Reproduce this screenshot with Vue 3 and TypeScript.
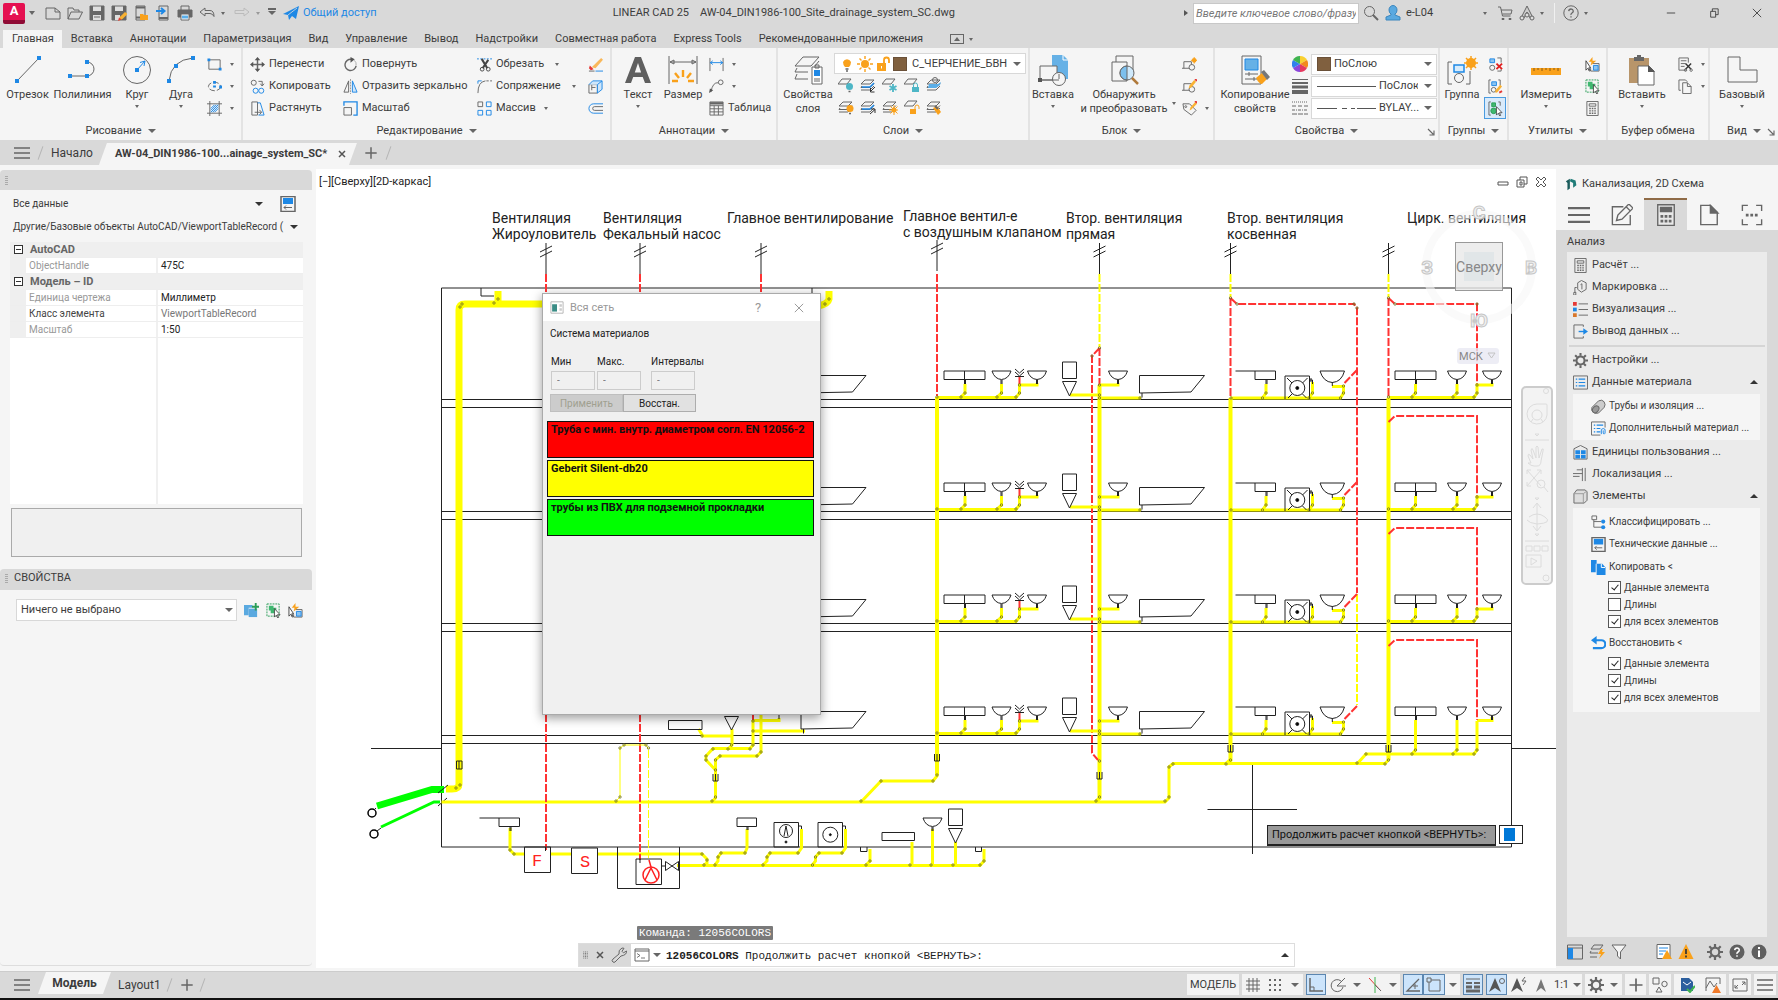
<script setup lang="ts">
import { h, ref } from 'vue'

const sheets = '<path d="M5 3h9l-4 4H1zM2 9l-1 1.500h9l4-4M1 13h9l4-4"/>'
const oneSheet = '<path d="M4 2h9l-4 5H0z"/>'
const blockBase = '<path d="M2 12V5h8v3M0 12h8"/><circle cx="10.500" cy="11" r="3"/>'
const cursor = '<path d="M9 6v9l2-2 1.500 3 1-.5-1.300-3H15z" fill="#fff" stroke="#444" stroke-width=".9"/>'

const icons: Record<string, string> = {
  fresh: '<path d="M1 3h9l5 4v7H1zM10 3v4h5"/>',
  open: '<path d="M1 14V3h5l1 2h5v2M1 14L4 7h11.500L12 14z"/>',
  save: '<path d="M1 1h14v14H1z" fill="#666"/><path d="M4 1.500h8V6H4zM4 10h8v5H4z" fill="#dedede" stroke="none"/><path d="M5 12h6"/>',
  saveas: '<path d="M1 1h14v14H1z" fill="#666"/><path d="M4 1.500h8V6H4zM4 10h5v5H4z" fill="#dedede" stroke="none"/><path d="M14 7l2.500 2-5 5-3.500 1.500.8-3.500z" fill="#f9b233" stroke="none"/><path d="M8 12.500l2.500 2L7 16z" fill="#e53935" stroke="none"/>',
  phoneopen: '<path d="M3 1h9v14H3z"/><path d="M3 2.500h9M3 12.500h4" stroke-width="2"/><path d="M7 15V9h3l1 1h4v5z" fill="#f9a11b" stroke="none"/>',
  phonesave: '<path d="M4 1h9v14H4z"/><path d="M4 13h9" stroke-width="2"/><path d="M1 6h8M6 3l3.500 3L6 9" stroke="#1e88e5" stroke-width="2"/>',
  print: '<path d="M4 5V1h8v4"/><path d="M1 5h14v7H1z" fill="#666"/><path d="M4 9h8v6H4z" fill="#fff"/><path d="M5 12h6" stroke="#5aaee8" stroke-width="3"/>',
  undo: '<path d="M1 7l5-4v2.500h5q4 0 4 6-1.500-3-4-3H6V11z"/>',
  redo: '<path d="M15 7l-5-4v2.500H1v3h9V11z" stroke="#bbb"/>',
  plane: '<path d="M0 9L16 1l-3 13-4-3-3 4-1-5z" fill="#1e88e5" stroke="none"/><path d="M14 3L5 10" stroke="#dedede" stroke-width=".8"/>',
  search: '<circle cx="6.500" cy="6.500" r="5"/><path d="M10 10l5 5" stroke-width="2"/>',
  user: '<path d="M4 5a4 4.500 0 0 1 8 0q0 3-2 4v1l5 2v3H1v-3l5-2V9Q4 8 4 5z" fill="#5aa9e0" stroke="#3b86bd"/>',
  cart: '<path d="M1 2h2.500l2 9h8M4 5h11l-1 4H5.500"/><path d="M5 13.500h2v1H5zM12 13.500h2v1h-2z" fill="#666"/>',
  aorg: '<path d="M8 1L2 13h3l3-6 3 6h3z" fill="#ccc"/><circle cx="3" cy="13" r="2" fill="#dedede"/><circle cx="8" cy="10" r="2" fill="#dedede"/><circle cx="13" cy="13" r="2" fill="#dedede"/>',
  help: '<circle cx="8" cy="8" r="7.200"/><path d="M5.700 6.200Q6 4 8 4t2.300 2Q10.300 7.200 9 8t-1 2M8 11.300v1.200" stroke-width="1.300"/>',
  line: '<path d="M5 27L27 4"/><path d="M3 25h4v4H3zM25 2h4v4h-4z" fill="#1e88e5" stroke="none"/>',
  pline: '<path d="M3 22h17a7 7 0 0 0 0-14"/><path d="M1 20h4v4H1zM18 20h4v4h-4zM18 6h4v4h-4z" fill="#1e88e5" stroke="none"/>',
  circle: '<circle cx="16" cy="16" r="13.500"/><path d="M16 16l8-9M24 7l-1 5M24 7l-5 1.500" stroke="#1e88e5"/><path d="M14 14h4v4h-4z" fill="#1e88e5" stroke="none"/>',
  arc: '<path d="M4 27Q6 6 28 4"/><path d="M2 25h4v4H2zM9 10h4v4H9zM26 2h4v4h-4z" fill="#1e88e5" stroke="none"/>',
  rect: '<path d="M2 3h12v10H2z"/><path d="M.500 1.500h3v3h-3zM12.500 11.500h3v3h-3z" fill="#1e88e5" stroke="none"/>',
  ellipse: '<ellipse cx="8" cy="8" rx="6.500" ry="4.500" stroke-dasharray="6 2"/><path d="M6.500 7h3v2h-3zM6.500 2h3v3h-3zM13 7h3v3h-3z" fill="#1e88e5" stroke="none"/>',
  hatch: '<path d="M3 0v16M13 0v16M0 3h16M0 13h16"/><path d="M4 12l8-8M4 8l4-4M8 12l4-4M4 10l6-6M6 12l6-6" stroke="#1e88e5"/>',
  move: '<path d="M8 2v12M2 8h12" stroke-width="1.600"/><path d="M8 0l3 3.500H5zM8 16l3-3.500H5zM0 8l3.500-3v6zM16 8l-3.500-3v6z" fill="#555" stroke="none"/>',
  copy: '<circle cx="4" cy="4" r="2.700"/><path d="M9 2.500h4V7M11 5l2 2.500L15 5"/><circle cx="6" cy="12.500" r="2.700" stroke="#1e88e5"/><circle cx="12" cy="12.500" r="2.700" stroke="#1e88e5"/>',
  stretch: '<path d="M2 1h6v14H2zM5 12h7M10 9.500l2.500 2.500L10 14.500"/><path d="M8 2h3l4 13H9" stroke="#1e88e5"/>',
  rotate: '<path d="M9 2.500a6 6 0 1 0 5 7" stroke-width="1.500"/><path d="M8 0l4.500 2.500L8 6z" fill="#555" stroke="none"/><path d="M14 9a6 6 0 0 0-2-5.500" stroke="#aaa"/>',
  mirror: '<path d="M6 2v12H1z"/><path d="M10 2v12h5z" stroke="#1e88e5" fill="#cfe6fa"/><path d="M8 0v16" stroke="#999" stroke-dasharray="2 1"/>',
  scale: '<path d="M1 7h8v8H1z"/><path d="M1 5V1h14v14h-4" stroke="#1e88e5" stroke-width="1.400"/>',
  trim: '<path d="M0 2h16" stroke="#1e88e5" stroke-dasharray="2 1.500"/><path d="M5 2l6 10M12 3L6 12" stroke="#444" stroke-width="2.200"/><circle cx="5.500" cy="13" r="2" stroke="#444"/><circle cx="12" cy="13" r="2" stroke="#444"/>',
  fillet: '<path d="M1 15Q1 3 9 2"/><path d="M10 2h6" stroke-dasharray="2.500 1.500"/><path d="M1 5V2h4" stroke="#1e88e5"/>',
  array: '<path d="M1 1h5v5H1z"/><path d="M10 1h5v5h-5zM1 10h5v5H1zM10 10h5v5h-5z" stroke="#1e88e5"/>',
  erase: '<path d="M14 1l2 2-8 9-4-1z" fill="#f9b85a" stroke="none"/><path d="M2 9l4 4-3 1-2-2z" fill="#e53935" stroke="none"/><path d="M1 15h6"/><path d="M8 15h8" stroke="#1e88e5"/>',
  box3d: '<path d="M1 6h9v9H1zM4 6v6M4 9h4"/><path d="M1 6l4-4h10l-5 4M15 2v9l-5 4V6" stroke="#1e88e5" fill="#cfe6fa"/>',
  offset: '<path d="M16 3H6a5 5 0 0 0 0 10h10" stroke="#1e88e5"/><path d="M16 6H7a2 2 0 0 0 0 4h9"/>',
  text: '<path d="M3 29L13 3h6l10 26h-6l-2.300-6h-9.500L9 29zM12.800 18.500h6.300L16 9z" fill="#5f5f5f" fill-rule="evenodd" stroke="none"/>',
  dim: '<path d="M2 2v28M30 2v28M3 8h26M3 8l4-2v4zM29 8l-4-2v4z"/><path d="M16 16v7M8 19l4 5M24 19l-4 5M5 27l6 0M27 27h-6" stroke="#f9a11b" stroke-width="2.400"/>',
  dimsm: '<path d="M1 1v14M15 1v14"/><path d="M1 6h14M4 4L1.500 6 4 8M12 4l2.500 2L12 8" stroke="#1e88e5"/>',
  leader: '<path d="M2 14Q4 3 10 4"/><circle cx="12.500" cy="3.500" r="2.500"/><path d="M0 15l1-5 3.500 2z" fill="#555" stroke="none"/>',
  table: '<path d="M1 1h14v14H1zM1 5h14M1 8.300h14M1 11.600h14M5.500 5v10M10 5v10"/><path d="M1 2.500h14" stroke-width="2.500"/>',
  layers: '<path d="M11 3h16l-8 9H3zM5 14l-2 4h13M5 20l-2 5h13M23 12l4-5"/><path d="M20 13h10v17H20z" fill="#fff"/><path d="M22 16h6v6h-6z" fill="#1e88e5" stroke="none"/><path d="M22 25h6M22 27h6M23 11h4v3h-4z"/>',
  bulb: '<path d="M4 6a4.500 5 0 0 1 8 0q0 3-2 5H6Q4 9 4 6z" fill="#f9a11b" stroke="none"/><path d="M6.500 13h3M7 15h2" stroke-width="1.500"/>',
  sun: '<circle cx="8" cy="8" r="4" fill="#f9a11b" stroke="none"/><path d="M8 0v3M8 13v3M0 8h3M13 8h3M2.500 2.500l2 2M11.500 11.500l2 2M13.500 2.500l-2 2M4.500 11.500l-2 2" stroke="#f9a11b" stroke-width="1.400"/>',
  unlock: '<path d="M2 7h9v8H2z" fill="#f9a11b" stroke="none"/><path d="M9 7V4a2.500 2.500 0 0 1 5 0v3" stroke="#f9a11b" stroke-width="1.800"/><path d="M6.500 10v2.500" stroke="#fff"/>',
  l1: oneSheet + '<circle cx="11.500" cy="9.500" r="3.500" fill="#4db6c6" stroke="none"/><path d="M10.500 14.500h2" stroke-width="1.500"/>',
  l2: sheets + '<path d="M2 10h8l4-4" stroke="#1e88e5" stroke-width="1.500"/><path d="M15 10l-4 4M10.500 11v4h4" stroke="#333"/>',
  l3: oneSheet + '<path d="M11 7v8M7.500 9l7 4M14.500 9l-7 4" stroke="#4db6c6" stroke-width="1.800"/>',
  l4: oneSheet + '<path d="M8 10h7v5H8z" fill="#4db6c6" stroke="none"/><path d="M9.500 10V8a2 2 0 0 1 4 0v2" stroke="#4db6c6"/>',
  l5: sheets + '<path d="M3 7h9l3-2-1 3-4 3H2z" fill="#5aaee8" stroke="none"/><circle cx="9" cy="3" r="2.500"/>',
  l6: sheets + '<circle cx="12" cy="9.500" r="3.500" fill="#f9a11b" stroke="none"/><path d="M11 14.500h2" stroke-width="1.500"/>',
  l7: sheets + '<path d="M2 10h8l4-4" stroke="#1e88e5" stroke-width="1.500"/><path d="M10 15l5-4.500M11 10h4v4" stroke="#333"/>',
  l8: sheets + '<circle cx="12" cy="11" r="2.500" fill="#f9a11b" stroke="none"/><path d="M12 6v10M7 11h9M8.500 7.500l7 7M15.500 7.500l-7 7" stroke="#f9a11b"/>',
  l9: oneSheet + '<path d="M6 10h6v5H6z" fill="#f9a11b" stroke="none"/><path d="M11 10V8a2 2 0 0 1 4 0v2" stroke="#f9a11b"/>',
  l10: sheets + '<path d="M7 9l4-2 4 6-3 3z" fill="#f9a11b" stroke="none"/><path d="M9 7l3 3" stroke-width="2"/>',
  insert: '<path d="M15 1h11l5 5v19H15z" fill="#66b1e6" stroke="none"/><path d="M26 1v5h5" stroke="#fff"/><path d="M3 26V12h17v14z" fill="#f5f5f5"/><circle cx="22" cy="25" r="6.500" fill="#f5f5f5"/><path d="M3 26h19M22 25v-5"/><path d="M1 24h4v4H1z" fill="#555" stroke="none"/>',
  detect: '<path d="M8 2h17v20H8z"/><path d="M4 8h15v19H4z" fill="#f5f5f5"/><circle cx="19" cy="19" r="7" fill="#cfe9fb"/><path d="M19 12a7 7 0 0 0 0 14z" fill="#7cc0ee"/><path d="M24 24l6 6" stroke="#b07a3c" stroke-width="2.500"/>',
  b1: blockBase + '<circle cx="13" cy="3.500" r="2.500" fill="#f9a11b" stroke="none"/><path d="M13 0v7M9.500 3.500H16" stroke="#f9a11b"/>',
  b2: blockBase + '<path d="M13 1l2 2-5 6-3 1 1-3z" fill="#f9b233" stroke="none"/><path d="M14 0l2 2" stroke="#e53935" stroke-width="2"/>',
  b3: '<path d="M1 3h7l7 7-5 5-8-6z"/><circle cx="4" cy="6" r="1"/><path d="M14 1l2 2-6 6-2 1 1-3z" fill="#f9b233" stroke="none"/><path d="M14 0l2 2" stroke="#e53935" stroke-width="2"/>',
  match: '<path d="M3 2h19v28H3z"/><path d="M6 5h13v11H6z" fill="#66b1e6" stroke="#1e88e5"/><path d="M6 20h13M6 25h13M10 18v4M15 23v4"/><path d="M17 24l6-5 5 6-5 5q-3 0-6-6z" fill="#f9a11b" stroke="none"/><path d="M22 18l3-2 6 7-3 3z" fill="#777" stroke="none"/>',
  wheel: '<g stroke="none"><path d="M8 8V0a8 8 0 0 1 7 4z" fill="#f9d030"/><path d="M8 8l7-4a8 8 0 0 1 0 8z" fill="#f28a1d"/><path d="M8 8l7 4a8 8 0 0 1-7 4z" fill="#e53960"/><path d="M8 8v8a8 8 0 0 1-7-4z" fill="#8b45d9"/><path d="M8 8l-7 4a8 8 0 0 1 0-8z" fill="#2f80ed"/><path d="M8 8L1 4a8 8 0 0 1 7-4z" fill="#3fb44f"/></g>',
  weights: '<path d="M0 1.500h16"/><path d="M0 5h16" stroke-width="2"/><path d="M0 9h16" stroke-width="3"/><path d="M0 14h16" stroke-width="4"/>',
  dashes: '<path d="M0 2h16" stroke-dasharray="1 1"/><path d="M0 6h16" stroke-dasharray="4 2"/><path d="M0 10h16" stroke-dasharray="3 1 1 1"/><path d="M0 14h16" stroke-dasharray="5 1"/>',
  group: '<path d="M6 8H2v22h4M20 30h4V17"/><path d="M8 11h10v7H8z" fill="#d8ecfb" stroke="#1e88e5" stroke-width="1.500"/><circle cx="13" cy="24" r="4.500"/><path d="M25 2v14M18 9h14M20 4l10 10M30 4L20 14" stroke="#f9a11b" stroke-width="1.500"/><circle cx="25" cy="9" r="5" fill="#f9a11b" stroke="none"/>',
  ungroup: '<path d="M2 2h5v4H2z" fill="#8cc4f0" stroke="#1e88e5"/><circle cx="4.500" cy="11.500" r="2.700"/><path d="M10 1h4v5M10 15h4v-2"/><path d="M9 7l6 6M15 7l-6 6" stroke="#e02020" stroke-width="2"/>',
  gedit: '<path d="M3 1H1v14h2M11 1h2v6"/><path d="M4 3h5v4H4z" fill="#8cc4f0" stroke="#1e88e5"/><circle cx="6" cy="11.500" r="2.500"/><path d="M13 6l2 2-5 6-2 1v-3z" fill="#f9b233" stroke="none"/><path d="M12 14.500l3-1.500" stroke="#e53935" stroke-width="2"/>',
  gsel: '<path d="M3 1H1v14h2M11 1h2v4"/><path d="M4 2h4v4H4z" fill="#3fb870" stroke="#2a9d57"/><circle cx="6" cy="10.500" r="3" fill="#3fb870" stroke="#2a9d57"/>' + cursor,
  measure: '<path d="M1 14h30v7H1z" fill="#f9a11b" stroke="none"/><path d="M4 14v3M8 14v2M12 14v3M16 14v2M20 14v3M24 14v2M28 14v3" stroke="#8a5a10"/>',
  qsel: '<path d="M8 7h7v8H6v-3"/><path d="M9 9h5v5H9z" fill="#8cc4f0" stroke="#1e88e5"/><path d="M8 0L4 5h3L6 9l6-5H8z" fill="#f9a11b" stroke="none"/><path d="M1 4v10l2-2 1.500 3 1-.5-1.500-3h2z" fill="#fff" stroke="#444"/>',
  selsim: '<path d="M1 1h13v13H1z" stroke="#2a9d57" stroke-dasharray="2 1"/><path d="M3 3h5v2h3v6H5V8H3z" fill="#3fb870" stroke="none"/>' + cursor,
  calc: '<path d="M2 0.500h12v15H2zM4.500 3h7v2.500h-7z"/><path d="M4.500 8h7M4.500 10.500h7M4.500 13h7" stroke-width="1.500" stroke-dasharray="1.700 1"/>',
  paste: '<path d="M3 4h20v25H3z" fill="#b8956a" stroke="none"/><path d="M8 3h10v4H8zM11 1h4v3h-4z" fill="#666" stroke="none"/><path d="M12 12h11l5 5v14H12z" fill="#fff"/><path d="M22 11l7 7h-7z" fill="#555" stroke="none"/>',
  cut: '<path d="M9 14H1V1h10v5M3 4h6M3 7h5M3 10h4"/><path d="M8 7l6 6M14 7l-6 6" stroke="#333" stroke-width="1.500"/><circle cx="8" cy="14" r="1.300"/><circle cx="14" cy="14" r="1.300"/>',
  clip: '<path d="M3 12H1V1h7l2 2"/><path d="M5 4h5l4 4v7.500H5zM10 4v4h4"/>',
  base: '<path d="M2 3h12v13h17v12H2z"/>',
  burger: '<path d="M0 3h16M0 8h16M0 13h16" stroke-width="1.600"/>',
  plus: '<path d="M8 1.500v13M1.500 8h13" stroke-width="1.700"/>',
  launch: '<path d="M4 4l7 7M12 6v6H6" stroke-width="1.500"/>',
  propcat: '<path d="M1 .500h14v15H1z" stroke-width="1.500"/><path d="M3 2h10v6H3z" fill="#1e88e5" stroke="none"/><path d="M4 11.500h8M6 9.500l-2 2 2 2"/>',
  addsel: '<path d="M0 2h9v3H5v8H0z" fill="#5aa9e0" stroke="none"/><path d="M5 6h9v9H5z" fill="#5aa9e0" stroke="none"/><path d="M12.500 0v8M8.500 4H16" stroke="#2a9d57" stroke-width="2"/>',
  win: '<path d="M0.500 1h15v14h-15z" fill="#fff" stroke="#aaa"/><path d="M2 4h6v9H2z" fill="#3b8d86" stroke="none"/><path d="M11 4h3v3h-3zM11 9h3v3h-3z" fill="#ccc" stroke="none"/>',
  wrench: '<path d="M2 15q-2-1 0-3l6-5Q7 3 11 1l2 .3-2 3 1.500 1.500L15.500 4Q16 8 10 9l-6 6q-1 .8-2 0z"/>',
  grip: '<path d="M4 0v16M8 0v16M12 0v16" stroke-width="2" stroke-dasharray="2 1.500"/>',
  prompt: '<path d="M1 2h14v12H1zM1 4h14"/><path d="M3 6.500l3 2-3 2M7 11h4" stroke-width=".9"/>',
  leaf: '<path d="M1 4l5-3v12l-3 2V6z" fill="#1b5c5c" stroke="none"/><path d="M7 1l6 2 1 6-4 3V6L6 4z" fill="#217c78" stroke="none"/>',
  pencil: '<path d="M9 2H1v13h13V8"/><path d="M4 12l1-4 8-8 3 3-8 8zM11 2l3 3"/>',
  calctab: '<path d="M2 0.500h12v15H2z" fill="#e8e8e8"/><path d="M4 2.500h8v3H4z" fill="#666"/><path d="M4 9h8M4 12.500h8" stroke-width="2" stroke-dasharray="2 1"/>',
  page: '<path d="M2 1h7l5 5v9H2z"/><path d="M9 1l5.500 5.500H9z" fill="#666"/>',
  dots: '<path d="M1 5V1h4M11 1h4v4M15 11v4h-4M5 15H1v-4"/><path d="M3.500 8h9" stroke-width="2" stroke-dasharray="2 1.300"/>',
  mark: '<path d="M5 3l4-2.500L14 3v7l-5 3-4-3z"/><path d="M8 5l1.500-1v6"/><path d="M4 8H2v6M0 14l3-1v3H0z"/>',
  visual: '<path d="M0 0h4v4H0z" fill="#e53935" stroke="none"/><path d="M0 6h4v4H0z" fill="#1e88e5" stroke="none"/><path d="M0 12h4v4H0z" fill="#d9772b" stroke="none"/><path d="M6 2h10M6 8h10M6 14h10"/>',
  out: '<path d="M11 3V1H1v14h10v-2"/><path d="M6 8h7" stroke="#1e88e5" stroke-width="1.500"/><path d="M11 4.500L16 8l-5 3.500z" fill="#1e88e5" stroke="none"/>',
  gear: '<circle cx="8" cy="8" r="4.300" stroke-width="2.200"/><path d="M8 0v3M8 13v3M0 8h3M13 8h3M2.300 2.300l2.200 2.200M11.500 11.500l2.200 2.200M13.700 2.300l-2.200 2.200M4.500 11.500l-2.200 2.200" stroke-width="2.200"/>',
  list: '<path d="M.500 1h15v14H.500z"/><path d="M6 4.500h7M6 8h7M6 11.500h7M3 4.500h1.500M3 8h1.500M3 11.500h1.500" stroke="#1e88e5" stroke-width="1.300"/>',
  pipe: '<path d="M1 9l7-7q4-2 6 1t0 6l-6 6q-4 1-6-1t-1-5z" fill="#ccc"/><ellipse cx="5" cy="11" rx="3" ry="4" fill="#999" transform="rotate(40 5 11)"/>',
  listp: '<path d="M15 7V1H.500v14H10"/><path d="M6 4.500h7M6 8h4M6 11.500h4M3 4.500h1.500M3 8h1.500M3 11.500h1.500" stroke="#1e88e5" stroke-width="1.300"/><path d="M11 14v-5q2-2 4 0v4q-1 2-2 0V10" stroke="#1e88e5"/>',
  house: '<path d="M1 15V4l7-3.500L15 4v11z"/><path d="M2.500 5.500h5v4h-5zM8.500 5.500h5v4h-5zM2.500 10.500h5v4h-5zM8.500 10.500h5v4h-5z" fill="#1e88e5" stroke="none"/>',
  local: '<path d="M0 7h10M0 10h7M10 1v14M13 1v14M4 3h6"/>',
  cube: '<path d="M1 5l3-4h9l2 2v9l-3 3H1z" fill="#ddd"/><path d="M1 5h10v10M11 5l4-3" stroke="#999"/>',
  tree: '<path d="M1 1h5v4H1zM3 5v8h9M3 7h8"/><circle cx="13" cy="7" r="2.200" fill="#1e88e5" stroke="none"/><circle cx="13" cy="13" r="2.200" fill="#1e88e5" stroke="none"/>',
  docs: '<path d="M0 0h6v4H5v9H0z" fill="#1e88e5" stroke="none"/><path d="M6 4h6l3.500 4v8H6z" fill="#1e88e5" stroke="none"/><path d="M11 4v4h4" stroke="#fff"/>',
  back: '<path d="M3 4.500h8a4 4 0 0 1 0 8.500H2" stroke="#1e88e5" stroke-width="2.300"/><path d="M6 0v9L0 4.500z" fill="#1e88e5" stroke="none"/>',
  pane: '<path d="M.500 1h15v14H.500zM.500 4h15"/><path d="M1 4h5v11H1z" fill="#1e88e5" stroke="none"/>',
  sheetbolt: '<path d="M5 1h9l-3 4H2zM1 9h8M1 13h7M2 7l-1 2"/><path d="M12 5l-3 5h3l-2 5 6-7h-3l1-3z" fill="#f9a11b" stroke="none"/>',
  funnel: '<path d="M1 1h14l-5.500 7v7l-3-3V8z" fill="#f5f5f5"/>',
  listwarn: '<path d="M1 0.500h13v14H1z" fill="#fff"/><path d="M3 4h9M3 7h7M3 10h4" stroke="#1e88e5"/><path d="M11 6l5 9H6z" fill="#f9a11b" stroke="none"/>',
  warn: '<path d="M8 0l7.500 15H.500z" fill="#f9a11b" stroke="none"/><path d="M8 5v5M8 11.500v2" stroke="#333" stroke-width="1.700"/>',
  helpf: '<circle cx="8" cy="8" r="7.500" fill="#5f5f5f" stroke="none"/><path d="M5.700 6.200Q6 4 8 4t2.300 2Q10.300 7.200 9 8t-1 2M8 11.300v1.500" stroke="#fff" stroke-width="1.500"/>',
  infof: '<circle cx="8" cy="8" r="7.500" fill="#5f5f5f" stroke="none"/><path d="M8 3v2M8 6.500V13" stroke="#fff" stroke-width="2"/>',
  grid: '<path d="M4 1v14M8 1v14M12 1v14M1 4h14M1 8h14M1 12h14"/>',
  snap: '<path d="M2 3h13M2 8h13M2 13h13" stroke-width="2" stroke-dasharray="2 3"/>',
  ortho: '<path d="M2 1v13h13" stroke-width="1.500"/><path d="M2 10h4v4"/>',
  polar: '<path d="M13 10a6 6 0 1 1-2-6M7 9l8-8M7 9h9"/>',
  iso: '<path d="M2 1l12 13" stroke="#e53935"/><path d="M8 0v16" stroke="#3fb44f"/><path d="M8 8l6 6"/>',
  track: '<path d="M14 2L2 14h13" stroke-width="1.300"/><path d="M10 7v5M8 9h5"/>',
  osnap: '<path d="M3 3h11v11H3z"/><path d="M1 1h4v4H1z" fill="#cce4f7"/>',
  lweight: '<path d="M1 2h14"/><path d="M1 6h6M9 6h6" stroke-width="2"/><path d="M1 10h6M9 10h6M1 14h14" stroke-width="3"/>',
  an1: '<path d="M6 1l6 14-6-4-6 4z" fill="#555" stroke="none"/><circle cx="13" cy="4" r="2.500"/>',
  an2: '<path d="M6 1l6 14-6-4-6 4z" fill="#555" stroke="none"/><path d="M14 0l-3 4h4l-3 4"/>',
  an3: '<path d="M8 2l5 13-5-4-5 4z" fill="#777" stroke="none"/>',
  shapes: '<path d="M1 1h6v6H1z"/><circle cx="12.500" cy="7" r="2.700"/><path d="M7 10l3 5H4z"/>',
  hw: '<path d="M2 1h8l4 4v9H2z" fill="#2c5f9e" stroke="none"/><path d="M4 5l4 3 4-3" stroke="#fff"/><path d="M8 12l3 3 5-6" stroke="#3fb44f" stroke-width="2"/>',
  graph: '<path d="M1 14V1h14v6"/><path d="M1 11l4-7 4 6 3-4"/><path d="M11.500 8l4.500 8H7z" fill="#ef7a2a" stroke="none"/>',
  full: '<path d="M1 2h14v12H1zM10 5h3v3M6 11H3V8M13 5l-3 3M3 11l3-3"/>',
}

const Ico = (p: { n: string; s?: number }) =>
  h('svg', { class: 'ico', viewBox: `0 0 ${p.s ?? 16} ${p.s ?? 16}`, innerHTML: icons[p.n], 'aria-hidden': 'true' })
Ico.props = ['n', 's']

const tabs = ['Главная', 'Вставка', 'Аннотации', 'Параметризация', 'Вид', 'Управление', 'Вывод', 'Надстройки', 'Совместная работа', 'Express Tools', 'Рекомендованные приложения']
const quick = ['fresh', 'open', 'save', 'saveas', 'phoneopen', 'phonesave', 'print']

const props = [
  { head: 'AutoCAD', rows: [['ObjectHandle', '475C', 'dim', '']] },
  { head: 'Модель – ID', rows: [['Единица чертежа', 'Миллиметр', 'dim', ''], ['Класс элемента', 'ViewportTableRecord', '', 'dim'], ['Масштаб', '1:50', 'dim', '']] },
]

const copyOpts = ref([
  { t: 'Данные элемента', on: true },
  { t: 'Длины', on: false },
  { t: 'для всех элементов', on: true },
])
const restoreOpts = ref([
  { t: 'Данные элемента', on: true },
  { t: 'Длины', on: true },
  { t: 'для всех элементов', on: true },
])

const legend = [
  { t: 'Труба с мин. внутр. диаметром согл. EN 12056-2', c: 'red' },
  { t: 'Geberit Silent-db20', c: 'yellow' },
  { t: 'трубы из ПВХ для подземной прокладки', c: 'lime' },
]

// Drawing data
const floors = [0, 112, 224, 336]
const vents = [
  { x: 546, y: 243 }, { x: 640, y: 243 }, { x: 761, y: 243 }, { x: 937, y: 240 },
  { x: 1099.5, y: 243 }, { x: 1230.5, y: 243 }, { x: 1388.5, y: 243 },
]
const labels: [number, number, string][] = [
  [492, 223, 'Вентиляция'], [492, 239, 'Жироуловитель'],
  [603, 223, 'Вентиляция'], [603, 239, 'Фекальный насос'],
  [727, 223, 'Главное вентилирование'],
  [903, 221, 'Главное вентил-е'], [903, 237, 'с воздушным клапаном'],
  [1066, 223, 'Втор. вентиляция'], [1066, 239, 'прямая'],
  [1227, 223, 'Втор. вентиляция'], [1227, 239, 'косвенная'],
  [1407, 223, 'Цирк. вентиляция'],
]
const traps = [[715.5, 778], [937, 758], [1099.5, 776], [1230.5, 749], [1388.5, 749]]
const floorNodes = [
  [937, 397], [961, 397], [965, 393], [997, 397], [1001.5, 393], [1016, 397], [1019.5, 393], [1019.5, 385],
  [1099.5, 385], [1099.5, 395], [1099.5, 398], [1140, 398], [1231, 398], [1262.5, 398], [1266, 393],
  [1309, 398], [1312.5, 393], [1340.5, 398], [1343.5, 393], [1343.5, 386],
]
const ventNodes = [
  [1388.5, 397], [1412, 397], [1415.5, 393], [1453, 397], [1457, 393], [1474, 397], [1477, 393], [1477, 385],
]
const nodes = [
  [462, 304], [460, 307], [494, 303], [498, 299], [829, 299], [825, 304], [1099.5, 348], [1092, 356],
  [1230.5, 298], [1237, 304], [1354, 304], [1357, 308], [1388.5, 298], [1395, 304], [1477, 304],
  [713, 749], [706, 756], [706, 760], [715.5, 770], [728, 749], [731.5, 745], [750, 749], [753, 745],
  [757, 756], [761, 752], [720, 756], [715.5, 760], [715.5, 797], [712, 801], [702, 736], [753, 731], [753, 721],
  [620, 748], [624, 745], [646, 745], [648.5, 748], [620, 797], [616, 801],
  [937, 775], [933, 781], [881, 781], [861, 801], [1099.5, 761], [1099.5, 797], [1096, 801], [1165, 801],
  [1169, 797], [1169, 767], [1173, 764], [1226, 764], [1230.5, 760], [1385, 764], [1388.5, 760], [1357, 763],
  [1366, 754], [1412, 754], [1415.5, 750], [1453, 754], [1457, 750], [1474, 754], [1477, 750],
  [510, 850], [514, 854], [702, 854], [707, 860], [704, 865], [715, 865], [718, 857], [721, 853], [745, 853],
  [763, 865], [767, 857], [770, 853], [798, 853], [812.5, 865], [815.5, 857], [819, 853], [842, 853],
  [866, 865], [870, 861], [910, 865], [931, 865], [953, 865], [980, 865], [984, 861], [456, 788], [460, 785],
]

type Cell = { i?: string; t?: string; on?: boolean; car?: boolean; w: number }
const status: Cell[][] = [
  [{ t: 'МОДЕЛЬ', w: 52 }],
  [{ i: 'grid', w: 21 }, { i: 'snap', w: 24 }, { car: true, w: 16 }],
  [{ i: 'ortho', on: true, w: 20 }, { i: 'polar', w: 24 }, { car: true, w: 14 }, { i: 'iso', w: 21 }, { car: true, w: 15 }],
  [{ i: 'track', on: true, w: 20 }, { i: 'osnap', on: true, w: 22 }, { car: true, w: 15 }],
  [{ i: 'lweight', on: true, w: 20 }],
  [{ i: 'an1', on: true, w: 21 }, { i: 'an2', w: 23 }, { i: 'an3', w: 22 }, { t: '1:1', w: 19 }, { car: true, w: 11 }],
  [{ i: 'gear', w: 21 }, { car: true, w: 16 }],
  [{ i: 'plus', w: 21 }],
  [{ i: 'shapes', w: 22 }],
  [{ i: 'hw', w: 26 }, { i: 'graph', w: 26 }],
  [{ i: 'full', w: 22 }],
  [{ i: 'burger', w: 22 }],
]
</script>

<template>
  <div class="app">
    <header class="titlebar">
      <button class="logo" aria-label="Меню приложения">A</button><i class="car wide"></i>
      <button v-for="q in quick" :key="q" class="qb" :aria-label="q"><Ico :n="q" /></button>
      <button class="qb" aria-label="undo"><Ico n="undo" /></button><i class="car slot"></i>
      <button class="qb" aria-label="redo"><Ico n="redo" /></button><i class="car slot faint"></i>
      <i class="car bar"></i>
      <a class="share" href="#"><Ico n="plane" />Общий доступ</a>
      <div class="doc"><span>LINEAR CAD 25</span><span>AW-04_DIN1986-100_Site_drainage_system_SC.dwg</span></div>
      <div class="account">
        <i class="arr"></i>
        <input class="search" type="text" placeholder="Введите ключевое слово/фразу" aria-label="Поиск" />
        <Ico n="search" /><Ico n="user" class="usr" /><span class="uname">e-L04</span>
        <i class="car"></i><Ico n="cart" class="cart" /><Ico n="aorg" /><i class="car"></i>
        <i class="vsep"></i><Ico n="help" /><i class="car"></i>
      </div>
      <div class="winbtns">
        <button aria-label="Свернуть"><svg viewBox="0 0 12 12"><path d="M1 6h10" /></svg></button>
        <button aria-label="Восстановить"><svg viewBox="0 0 12 12"><path d="M2 4h6v7H2zM4 4V1h7v7H8" /></svg></button>
        <button aria-label="Закрыть"><svg viewBox="0 0 12 12"><path d="M1 1l10 10M11 1L1 11" /></svg></button>
      </div>
    </header>

    <nav class="tabs">
      <button v-for="(t, k) in tabs" :key="t" :class="{ active: k === 0 }">{{ t }}</button>
      <button class="collapse" aria-label="Свернуть ленту"><i class="mini"></i><i class="car"></i></button>
    </nav>

    <section class="ribbon">
      <div class="panel">
        <div class="body g-draw">
          <button class="big"><Ico n="line" :s="32" />Отрезок</button>
          <button class="big"><Ico n="pline" :s="32" />Полилиния</button>
          <button class="big"><Ico n="circle" :s="32" />Круг<i class="car"></i></button>
          <button class="big"><Ico n="arc" :s="32" />Дуга<i class="car"></i></button>
          <div class="col">
            <button v-for="n in ['rect', 'ellipse', 'hatch']" :key="n" class="sm" :aria-label="n"><Ico :n="n" /><i class="car"></i></button>
          </div>
        </div>
        <h2>Рисование<i class="car lg"></i></h2>
      </div>
      <div class="panel">
        <div class="body g-edit">
          <div class="col">
            <button class="sm"><Ico n="move" />Перенести</button>
            <button class="sm"><Ico n="copy" />Копировать</button>
            <button class="sm"><Ico n="stretch" />Растянуть</button>
          </div>
          <div class="col">
            <button class="sm"><Ico n="rotate" />Повернуть</button>
            <button class="sm"><Ico n="mirror" />Отразить зеркально</button>
            <button class="sm"><Ico n="scale" />Масштаб</button>
          </div>
          <div class="col">
            <button class="sm"><Ico n="trim" />Обрезать<i class="car far"></i></button>
            <button class="sm"><Ico n="fillet" />Сопряжение<i class="car far"></i></button>
            <button class="sm"><Ico n="array" />Массив<i class="car"></i></button>
          </div>
          <div class="col">
            <button v-for="n in ['erase', 'box3d', 'offset']" :key="n" class="sm" :aria-label="n"><Ico :n="n" /></button>
          </div>
        </div>
        <h2>Редактирование<i class="car lg"></i></h2>
      </div>
      <div class="panel">
        <div class="body g-anno">
          <button class="big"><Ico n="text" :s="32" />Текст<i class="car"></i></button>
          <button class="big"><Ico n="dim" :s="32" />Размер</button>
          <div class="col">
            <button class="sm" aria-label="Линейный"><Ico n="dimsm" /><i class="car"></i></button>
            <button class="sm" aria-label="Выноска"><Ico n="leader" /><i class="car"></i></button>
            <button class="sm"><Ico n="table" />Таблица</button>
          </div>
        </div>
        <h2>Аннотации<i class="car lg"></i></h2>
      </div>
      <div class="panel">
        <div class="body g-layer">
          <button class="big"><Ico n="layers" :s="32" />Свойства<br />слоя</button>
          <div class="col">
            <div class="combo">
              <Ico n="bulb" /><Ico n="sun" /><Ico n="unlock" /><i class="swatch"></i>
              <select aria-label="Слой"><option>С_ЧЕРЧЕНИЕ_БВН</option></select><i class="car lg"></i>
            </div>
            <div class="icons"><button v-for="n in ['l1', 'l2', 'l3', 'l4', 'l5']" :key="n" :aria-label="n"><Ico :n="n" /></button></div>
            <div class="icons"><button v-for="n in ['l6', 'l7', 'l8', 'l9', 'l10']" :key="n" :aria-label="n"><Ico :n="n" /></button></div>
          </div>
        </div>
        <h2>Слои<i class="car lg"></i></h2>
      </div>
      <div class="panel">
        <div class="body g-block">
          <button class="big"><Ico n="insert" :s="32" />Вставка<i class="car"></i></button>
          <button class="big"><Ico n="detect" :s="32" />Обнаружить<br />и преобразовать</button>
          <i class="car low"></i>
          <div class="col">
            <button class="sm" aria-label="Создать"><Ico n="b1" /></button>
            <button class="sm" aria-label="Изменить"><Ico n="b2" /></button>
            <button class="sm" aria-label="Атрибуты"><Ico n="b3" /><i class="car"></i></button>
          </div>
        </div>
        <h2>Блок<i class="car lg"></i></h2>
      </div>
      <div class="panel">
        <div class="body g-props">
          <button class="big"><Ico n="match" :s="32" />Копирование<br />свойств</button>
          <div class="col">
            <div class="prow"><Ico n="wheel" /><div class="combo"><i class="swatch"></i><select aria-label="Цвет"><option>ПоСлою</option></select><i class="car lg"></i></div></div>
            <div class="prow"><Ico n="weights" /><div class="combo"><i class="rule"></i><select class="clip" aria-label="Вес линий"><option>ПоСлою</option></select><i class="car lg"></i></div></div>
            <div class="prow"><Ico n="dashes" /><div class="combo"><i class="rule broken"></i><select aria-label="Тип линий"><option>BYLAY...</option></select><i class="car lg"></i></div></div>
          </div>
        </div>
        <h2>Свойства<i class="car lg"></i><Ico n="launch" class="launch" /></h2>
      </div>
      <div class="panel">
        <div class="body g-group">
          <button class="big"><Ico n="group" :s="32" />Группа</button>
          <div class="col">
            <button class="sm tight" aria-label="Разгруппировать"><Ico n="ungroup" /></button>
            <button class="sm tight" aria-label="Редактировать группу"><Ico n="gedit" /></button>
            <button class="sm tight pressed" aria-label="Выбор группы"><Ico n="gsel" /></button>
          </div>
        </div>
        <h2>Группы<i class="car lg"></i></h2>
      </div>
      <div class="panel">
        <div class="body g-util">
          <button class="big"><Ico n="measure" :s="32" />Измерить<i class="car"></i></button>
          <div class="col">
            <button v-for="n in ['qsel', 'selsim', 'calc']" :key="n" class="sm" :aria-label="n"><Ico :n="n" /></button>
          </div>
        </div>
        <h2>Утилиты<i class="car lg"></i></h2>
      </div>
      <div class="panel">
        <div class="body g-clip">
          <button class="big"><Ico n="paste" :s="32" />Вставить<i class="car"></i></button>
          <div class="col">
            <button class="sm" aria-label="Вырезать"><Ico n="cut" /><i class="car"></i></button>
            <button class="sm" aria-label="Копировать"><Ico n="clip" /><i class="car"></i></button>
          </div>
        </div>
        <h2>Буфер обмена</h2>
      </div>
      <div class="panel">
        <div class="body g-view"><button class="big"><Ico n="base" :s="32" />Базовый<i class="car"></i></button></div>
        <h2>Вид<i class="car lg"></i><Ico n="launch" class="launch" /></h2>
      </div>
    </section>

    <nav class="files">
      <button class="fb" aria-label="Меню"><Ico n="burger" /></button><i class="slash"></i>
      <button class="start">Начало</button>
      <div class="ftab"><span>AW-04_DIN1986-100...ainage_system_SC*</span><button aria-label="Закрыть вкладку"><svg viewBox="0 0 8 8"><path d="M1 1l6 6M7 1L1 7" /></svg></button></div>
      <button class="fb add" aria-label="Новая вкладка"><Ico n="plus" /></button><i class="slash"></i>
    </nav>

    <main class="work">
      <aside class="left">
        <div class="phead"><i class="grip"></i></div>
        <div class="frow"><label for="scope">Все данные</label><i class="car lg dark"></i><button id="scope" class="fi" aria-label="Все данные"><Ico n="propcat" /></button></div>
        <div class="frow second"><span>Другие/Базовые объекты AutoCAD/ViewportTableRecord (</span><i class="car lg dark"></i></div>
        <div class="pgrid">
          <table>
            <colgroup><col class="gut" /><col class="keycol" /><col /></colgroup>
            <tbody v-for="g in props" :key="g.head">
              <tr class="sec"><th class="gut"><i class="mins"></i></th><th colspan="2">{{ g.head }}</th></tr>
              <tr v-for="r in g.rows" :key="r[0]"><td class="gut"></td><td class="key" :class="r[2]">{{ r[0] }}</td><td class="val" :class="r[3]">{{ r[1] }}</td></tr>
            </tbody>
          </table>
        </div>
        <div class="desc"></div>
        <div class="phead low"><i class="grip"></i>СВОЙСТВА</div>
        <div class="selrow">
          <div class="combo"><select aria-label="Выбор"><option>Ничего не выбрано</option></select><i class="car lg"></i></div>
          <button aria-label="Добавить"><Ico n="addsel" /></button>
          <button aria-label="Выбрать"><Ico n="selsim" /></button>
          <button aria-label="Быстрый выбор"><Ico n="qsel" /></button>
        </div>
        <div class="rest"></div>
      </aside>

      <section class="canvas">
        <svg class="drawing" viewBox="316 169 1240 799" preserveAspectRatio="xMidYMid slice">
          <defs>
            <g id="basin"><path d="M-9.500 0H9.500Q7 8 0 8.500Q-7 8-9.500 0z" /><path d="M-.500 9v4M.500 9v4" /></g>
            <g id="wc"><path d="M-7 0H7V16.500H-7zM-7 19.500H7L0 34z" /></g>
            <g id="sink"><path d="M-20.500 0H20.500V8.500H-20.500zM0 0V13M1 8v5" /></g>
            <g id="shelf"><path d="M-30.500 0H9.500V8.500H-11V0M0 8v5M1 8v5" /></g>
            <g id="tub"><path d="M0 0H65L51.500 16.500L0 17.500zM2.500 17.500V22" /></g>
            <g id="washer"><path d="M0 23V0H24.500V23M2 2l5 5M22.500 2l-5 5M3 22l4-4M21.500 22l-4-4M24.500 4h3v4M26 2v4" /><ellipse cx="12.300" cy="12" rx="7.500" ry="7.500" /><circle cx="12.300" cy="12" r="1.500" fill="#000" /></g>
            <g id="trap"><path d="M-2.500-4v7M2.500-4v7M-2.500 3h5M0-4v7" /></g>
          </defs>

          <g class="k">
            <path d="M441.500 288H1511.500V847H441.500z" />
            <path v-for="d in floors" :key="d" :d="`M441.500 ${399.5 + d}H1511.500M441.500 ${407.5 + d}H1511.500`" />
            <path d="M371 748.500H441.500M1511.500 748.500H1556" />
            <path d="M481 288v8h13M812 288v7h8" />
            <path v-for="v in vents" :key="v.x" :d="`M${v.x} ${v.y}v31M${v.x - 6} ${v.y + 9}l12-6M${v.x - 6} ${v.y + 14}l12-6`" />
          </g>

          <g class="y thick">
            <path d="M546 304H465Q459 304 459 310V784Q459 789 452 789H446" />
            <path d="M498 291V302M829 291V299Q828 304 818 306" />
          </g>
          <g class="g"><path class="g1" d="M444 789.500H432L377 806" /><path d="M440 802H434L381 827" /></g>
          <g class="k2"><circle cx="372" cy="813" r="4" /><circle cx="374" cy="834" r="4" /></g>
          <g class="k"><path d="M438 793l10-8M438 806l9-8M376 808l-2 2M381 828l-4 3" /></g>

          <g class="y">
            <path d="M441.500 802H1165L1169 798V767L1173 763.500H1385L1388.500 760" />
            <path d="M937 774V776L933 781H881L861 802" />
            <path class="riser" d="M937 397V775M1099.500 385V798L1096 802M1230.500 398V760L1226 764M1388.500 398V760" />
            <path d="M1357 764L1366 754H1474L1477 750V721M1415.500 720V750L1412 754M1457 720V750L1453 754M1477 720.500H1492V717" />
            <path d="M753 720V745L750 748.500H713L706 756V760L715.500 770" />
            <path d="M761 714V752L757 756H720L715.500 760V798L712 802" />
            <path d="M698.500 729L703 736H732M732 729V745L728 749M753 720.500H779V718M753 731H805" />
            <path d="M510 828V850L514 854H525M550 854H572M597.500 854H702L707 859V863L704 865" />
            <path d="M677 865.500H980L984 861V849M747 829V848L745 853H721L718 857V861L715 865" />
            <path d="M801.500 829V848L798 853H770L767 857V861L763 865M845.500 829V848L842 853H819L815.500 857V861L812.500 865" />
            <path d="M870 849V861L866 865M912 842V865M932.500 829V865M955.500 842V865" />
          </g>
          <g class="r">
            <path d="M546 274V850M640 274V860M761 274V294M753 714V720M937 274V396" />
            <path d="M1099.500 348V385M1099.500 348L1092 356V753L1098 760" />
            <path d="M1230.500 298V397M1230.500 298L1237 304H1354L1357 308V593" />
            <path d="M1388.500 298V397M1388.500 298L1395 304H1477V384" />
            <path v-for="d in [112, 224, 336]" :key="d" :d="`M1388.500 ${310 + d}L1395 ${304 + d}H1477V${384 + d}`" />
          </g>
          <g class="yt"><path d="M1099.500 274V347M1230.500 274V297M1388.500 274V297M1357 594V705" /><path class="thin" d="M648.500 750V858" /><path class="solid" d="M616 801L620 797V748L624 745H646L648.500 749" /></g>

          <g v-for="d in floors" :key="d" :transform="`translate(0 ${d})`">
            <g class="y">
              <path d="M937 397.500H1016L1019.500 393V385H1037V383M965 384V393L961 397M1001.500 384V393L997 397" />
              <path d="M1070 395H1099.500M1099.500 385H1118V383M1099.500 398H1141" />
              <path d="M1230.500 398H1340.500L1343.500 393V386.500H1332M1266 384V393L1262.500 398M1312.500 382V393L1309 398" />
            </g>
            <g v-if="d < 336" class="y"><path d="M1388.500 397.500H1474L1477 393V385H1492V383M1415.500 384V393L1412 397M1457 384V393L1453 397" /></g>
            <g class="r"><path d="M1019.500 376V385M1357 370L1343.500 384" /></g>
            <g class="k">
              <use href="#sink" x="964.500" y="371" /><use href="#basin" x="1001.500" y="371" /><use href="#basin" x="1037" y="371" />
              <path d="M1015 369l4.500 4 4.500-4M1015 372l4.500 4 4.500-4M1015 376.500h9" />
              <use href="#wc" x="1069.500" y="362" /><use href="#basin" x="1118" y="371" /><use href="#tub" x="1139.500" y="375.500" />
              <use href="#tub" x="801" y="375.500" />
              <use href="#shelf" x="1266" y="371" /><use href="#washer" x="1285" y="376" />
              <path d="M1320 371h24.500q-3 11-12.200 11.500q-9-.5-12.300-11.500zM1332.300 382v4" />
              <use href="#sink" x="1415.500" y="371" /><use href="#basin" x="1457" y="371" /><use href="#basin" x="1492" y="371" />
            </g>
            <g class="n"><circle v-for="(n, k) in d < 336 ? floorNodes.concat(ventNodes) : floorNodes" :key="k" :cx="n[0]" :cy="n[1]" r="1.200" /></g>
          </g>

          <g class="k">
            <use v-for="t in traps" :key="t[0]" href="#trap" :x="t[0]" :y="t[1]" />
            <path d="M456.500 761h5.500v8h-5.500zM459 761v8M779 714v5" />
            <path d="M668.500 720.500h33.500v9h-33.500zM724.500 716.500h14L731.500 730z" />
            <use href="#shelf" x="510" y="818" />
            <path d="M524.500 847h26v25.500h-26zM571.500 848h26v25.500h-26zM617.500 847v41.500h62V847M636 859h25.500v25.500H636zM661.500 866h4M665.500 861.500v9l13-9v9zM545.500 847v4M640 859v4" />
            <path d="M737 818h19.500v8.500H737zM747 826v4M748 826v4M774 822.500h24.500V847H774zM818 822.500h24.500V847H818zM798.500 826h3v3M842.500 826h3v3" />
            <circle cx="786" cy="831" r="6.500" /><path d="M784 836l2-10 2 10" /><circle cx="786" cy="842" r="1" fill="#000" />
            <circle cx="830.300" cy="834.700" r="7.500" /><circle cx="830.300" cy="834.700" r="1" fill="#000" />
            <path d="M860.500 847v4.500h6.500V847M975.500 847v4.500h6V847M882 832.500h32.500v8H882z" />
            <use href="#basin" x="932.500" y="818" /><use href="#wc" x="955.500" y="809" />
            <path d="M1207.500 809.500H1297M1252.500 765V854" />
          </g>
          <g class="rs"><circle cx="651" cy="875" r="8" /><path d="M645 880l6-12 6 12M651 867l-2-7" /></g>
          <text class="box" x="532" y="866">F</text><text class="box" x="580" y="867">S</text>
          <g class="n"><circle v-for="(n, k) in nodes" :key="k" :cx="n[0]" :cy="n[1]" r="1.200" /></g>
          <text v-for="l in labels" :key="l[0] + l[2]" class="cad" :x="l[0]" :y="l[1]">{{ l[2] }}</text>

          <g class="cube">
            <circle cx="1479" cy="267" r="53" />
            <rect x="1455.500" y="242.500" width="47" height="48" /><rect class="in" x="1464" y="252" width="30" height="29" />
            <text class="face" x="1479" y="272">Сверху</text>
            <text x="1479" y="219">С</text><text x="1479" y="327">Ю</text><text x="1427" y="274">З</text><text x="1531" y="274">В</text>
            <rect class="pill" x="1457" y="348" width="42" height="16" rx="3" /><text class="msk" x="1471" y="360">МСК</text><path d="M1488 353h7l-3.500 5z" />
          </g>
        </svg>

        <div class="vplabel">[−][Сверху][2D-каркас]</div>
        <div class="vpbtns">
          <button aria-label="Свернуть вид"><svg viewBox="0 0 12 12"><path d="M1 6h10v3H1z" /></svg></button>
          <button aria-label="Восстановить вид"><svg viewBox="0 0 12 12"><path d="M1 4h7v7H1zM4 4V1h7v7H8M4 6h2v3H4z" /></svg></button>
          <button aria-label="Закрыть вид"><svg viewBox="0 0 12 12"><path d="M1 3l2-2 3 3 3-3 2 2-3 3 3 3-2 2-3-3-3 3-2-2 3-3z" /></svg></button>
        </div>
        <svg class="navbar" viewBox="0 0 32 199">
          <rect x="1" y="1" width="30" height="197" rx="4" /><path d="M4 54h24M4 155h24" />
          <path d="M16 18h9q1 0 1 1v10a10 10 0 1 1-10-11z" /><circle cx="16" cy="29" r="5" /><path d="M12 33l-2 3M20 33l2 3" /><circle cx="25" cy="5" r="2.500" /><path d="M14 48h4l-2 2zM14 112h4l-2 2zM14 148h4l-2 2z" />
          <path d="M10 77l-3-7q0-3 2-1l3 4-2-9q1-3 2 0l3 8V61q1-2 2 0l1 11 3-9q2-1 1 2l-2 10q0 5-4 5h-3q-3 0-6-3z" />
          <path d="M6 84l14 16M20 84L6 100M6 88v-4h4M16 84h4v4M6 96v4h4" /><circle cx="20" cy="98" r="4" /><path d="M23 101l4 5" />
          <path d="M16 118v26M12 122l4-5 4 5M12 140l4 5 4-5M8 131q8-6 16 0t-8 7q-8-1-10-4" />
          <path d="M5 160h6v5H5zM13 160h6v5h-6zM21 160h6v5h-6zM5 169h15v12H5zM10 172l6 3-6 4z" /><circle cx="25" cy="192" r="3" />
        </svg>
        <div class="tip"><span>Продолжить расчет кнопкой &lt;ВЕРНУТЬ&gt;:</span><i class="entry"></i></div>

        <div class="dialog">
          <div class="dhead"><Ico n="win" /><span>Вся сеть</span><button aria-label="Справка">?</button><button aria-label="Закрыть"><svg viewBox="0 0 12 12"><path d="M1 1l10 10M11 1L1 11" /></svg></button></div>
          <div class="dbody">
            <p>Система материалов</p>
            <div class="nums">
              <label>Мин<input value="-" disabled /></label>
              <label>Макс.<input value="-" disabled /></label>
              <label>Интервалы<input value="-" disabled /></label>
            </div>
            <div class="acts"><button disabled>Применить</button><button>Восстан.</button></div>
            <ul><li v-for="l in legend" :key="l.c" :class="l.c">{{ l.t }}</li></ul>
          </div>
        </div>

        <div class="cmd">
          <div class="hist">Команда: 12056COLORS</div>
          <div class="cline">
            <div class="cgray"><Ico n="grip" class="gr" /><svg class="cx" viewBox="0 0 8 8"><path d="M1 1l6 6M7 1L1 7" /></svg><Ico n="wrench" /></div>
            <Ico n="prompt" /><i class="car lg"></i>
            <span><b>12056COLORS</b> Продолжить расчет кнопкой &lt;ВЕРНУТЬ&gt;:</span><i class="car up"></i>
          </div>
        </div>
      </section>

      <aside class="right">
        <div class="rtitle"><Ico n="leaf" />Канализация, 2D Схема</div>
        <div class="rtabs">
          <button v-for="n in ['burger', 'pencil', 'calctab', 'page', 'dots']" :key="n" :class="{ active: n === 'calctab' }" :aria-label="n"><Ico :n="n" /></button>
        </div>
        <div class="rbody">
          <h3>Анализ</h3>
          <div class="rlist">
            <button><Ico n="calc" />Расчёт ...</button>
            <button><Ico n="mark" />Маркировка ...</button>
            <button><Ico n="visual" />Визуализация ...</button>
            <button><Ico n="out" />Вывод данных ...</button>
            <hr />
            <button><Ico n="gear" />Настройки ...</button>
            <button><Ico n="list" />Данные материала<i class="car up"></i></button>
            <div class="sub">
              <button><Ico n="pipe" />Трубы и изоляция ...</button>
              <button><Ico n="listp" />Дополнительный материал ...</button>
            </div>
            <button><Ico n="house" />Единицы пользования ...</button>
            <button><Ico n="local" />Локализация ...</button>
            <button><Ico n="cube" />Элементы<i class="car up"></i></button>
            <div class="sub">
              <button><Ico n="tree" />Классифицировать ...</button>
              <button><Ico n="propcat" />Технические данные ...</button>
              <button class="op"><Ico n="docs" />Копировать &lt;</button>
              <label v-for="c in copyOpts" :key="c.t"><input v-model="c.on" type="checkbox" />{{ c.t }}</label>
              <button class="op"><Ico n="back" />Восстановить &lt;</button>
              <label v-for="c in restoreOpts" :key="c.t"><input v-model="c.on" type="checkbox" />{{ c.t }}</label>
            </div>
          </div>
          <div class="rfoot">
            <button v-for="n in ['pane', 'sheetbolt', 'funnel']" :key="n" :aria-label="n"><Ico :n="n" /></button><i class="sp"></i>
            <button v-for="n in ['listwarn', 'warn']" :key="n" :aria-label="n"><Ico :n="n" /></button><i class="sp2"></i>
            <button v-for="n in ['gear', 'helpf', 'infof']" :key="n" :aria-label="n"><Ico :n="n" /></button>
          </div>
        </div>
      </aside>
    </main>

    <footer class="status">
      <button class="fb" aria-label="Меню листов"><Ico n="burger" /></button>
      <button class="mtab">Модель</button><button class="lay">Layout1</button><i class="slash"></i>
      <button class="fb add" aria-label="Новый лист"><Ico n="plus" /></button><i class="slash"></i>
      <div class="cells">
        <div v-for="(g, k) in status" :key="k" class="cg">
          <button v-for="(c, j) in g" :key="j" :class="{ on: c.on }" :style="{ width: c.w + 'px' }" :aria-label="c.i ?? c.t ?? 'ещё'">
            <Ico v-if="c.i" :n="c.i" /><template v-else-if="c.t">{{ c.t }}</template><i v-else class="car lg"></i>
          </button>
        </div>
      </div>
    </footer>
  </div>
</template>

<style>
body { margin: 0; background: #f5f5f5; }
</style>

<style scoped>
.app { display: flex; flex-direction: column; min-height: 100vh; box-sizing: border-box; border-bottom: 2px solid #111; background: #f5f5f5; color: #3c3c3c; font: 11px/14px Roboto, "Noto Sans", sans-serif; }
.app *, .app *::before { box-sizing: border-box; }
button { border: 0; padding: 0; margin: 0; background: none; color: inherit; font: inherit; }
select { appearance: none; border: 0; background: none; font: inherit; color: inherit; padding: 0; flex: 1; min-width: 0; outline: 0; }
.ico { width: 16px; height: 16px; flex: none; fill: none; stroke: #666; stroke-width: 1; display: block; }
.car { width: 0; height: 0; flex: none; border: 2px solid transparent; border-top: 3px solid #666; border-bottom: 0; display: block; }
.car.lg { border-width: 4px 4px 0; }
.car.dark { border-top-color: #333; }
.car.up { border-width: 0 4px 4px; border-bottom: 4px solid #333; }

.titlebar { display: flex; align-items: center; height: 30px; background: #d9d9d9; padding: 0 0 4px 3px; }
.logo { width: 22px; height: 21px; background: #e51050; border-bottom: 4px solid #8f0b35; color: #fff; font-weight: bold; font-size: 13px; line-height: 16px; border-radius: 2px; }
.car.wide { margin: 0 7px 0 4px; border-width: 4px 3px 0; }
.qb { width: 22px; height: 22px; display: grid; place-items: center; }
.car.slot { margin: 0 6px 0 3px; }
.car.faint { border-top-color: #999; }
.car.bar { border-width: 4px 4px 0; margin-left: 2px; position: relative; }
.car.bar::before { content: ""; position: absolute; left: -4px; top: -7px; width: 8px; height: 2px; background: #666; }
.share { display: flex; align-items: center; gap: 4px; margin-left: 7px; color: #1e88e5; text-decoration: none; }
.doc { flex: 1; display: flex; justify-content: flex-start; gap: 11px; padding-left: 236px; white-space: nowrap; }
.account { display: flex; align-items: center; }
.arr { border: 3px solid transparent; border-left: 4px solid #555; border-right: 0; margin-right: 5px; }
.search { width: 166px; height: 21px; border: 1px solid #c8c8c8; background: #fff; font: italic 11px/14px Roboto, sans-serif; padding: 0 2px; margin-right: 4px; }
.search::placeholder { color: #777; font-size: 11px; }
.search { font-size: 11px; }
.usr { margin: 0 5px 0 6px; }
.uname { width: 77px; }
.cart { margin: 0 6px 0 10px; }
.account .ico + .car { margin-left: 5px; }
.vsep { width: 1px; height: 20px; background: #f0f0f0; margin: 0 8px 0 10px; }
.winbtns { display: flex; margin-left: 61px; }
.winbtns button { width: 43px; display: grid; place-items: center; }
.winbtns svg { width: 10px; height: 10px; fill: none; stroke: #333; }

.tabs { display: flex; height: 18px; background: #d9d9d9; padding-left: 3px; }
.tabs button { padding: 0 8px 0 9px; line-height: 18px; white-space: nowrap; }
.tabs .active { background: #f5f5f5; }
.tabs .collapse { display: flex; align-items: center; gap: 5px; margin-left: 10px; }
.mini { width: 14px; height: 10px; border: 1px solid #666; position: relative; }
.mini::before { content: ""; position: absolute; left: 3px; top: 2px; border: 3px solid transparent; border-top: 0; border-bottom: 4px solid #666; }

.ribbon { display: grid; grid-template-columns: 243fr 369fr 166fr 252fr 185fr 225fr 69fr 99fr 102fr 68fr; height: 92px; background: #f5f5f5; white-space: nowrap; }
.panel { display: flex; flex-direction: column; border-right: 2px solid #e3e3e3; min-width: 0; }
.panel:last-child { border-right: 0; }
.panel h2 { margin: 0; font: inherit; height: 18px; line-height: 18px; display: flex; align-items: center; justify-content: center; gap: 6px; position: relative; }
.launch { position: absolute; right: 1px; top: 4px; width: 12px; height: 12px; }
.body { display: grid; height: 74px; padding-top: 5px; align-items: start; }
.big { display: flex; flex-direction: column; align-items: center; height: 66px; padding-top: 1px; line-height: 14px; }
.big .ico { width: 32px; height: 32px; margin-bottom: 2px; }
.big .car { margin-top: 3px; }
.col { display: flex; flex-direction: column; }
.sm { display: flex; align-items: center; gap: 4px; height: 22px; }
.sm .ico { width: 15px; height: 15px; }
.sm .car { margin-left: 4px; }
.sm .car.far { margin-left: 7px; }
.tight { width: 22px; justify-content: center; }
.pressed { background: #d9eafa; border: 1px solid #4a9be0; }
.g-draw { grid-template-columns: 45px 65px 44px 44px 30px; padding-left: 5px; }
.g-draw .col { padding-left: 4px; }
.g-edit { grid-template-columns: 93px 134px 111px 20px; padding-left: 7px; }
.g-anno { grid-template-columns: 46px 44px 66px; padding-left: 3px; }
.g-anno .col { padding-left: 4px; }
.g-layer { grid-template-columns: 52px 1fr; padding: 5px 2px 0 4px; }
.combo { display: flex; align-items: center; height: 21px; background: #fff; border: 1px solid #d8d8d8; padding: 0 4px; gap: 2px; min-width: 0; }
.swatch { width: 14px; height: 14px; background: #80603f; border: 1px solid #6a5038; flex: none; }
.g-layer .combo select { padding-left: 3px; }
.icons { display: flex; gap: 6px; height: 22px; align-items: center; padding-left: 4px; }
.g-block { grid-template-columns: 46px 96px 10px 30px; }
.car.low { margin-top: 49px; }
.g-props { grid-template-columns: 74px 1fr; padding: 5px 1px 0 3px; }
.prow { display: grid; grid-template-columns: 19px 1fr; height: 22px; align-items: center; }
.prow .combo { padding: 0 4px 0 5px; }
.prow select { padding-left: 1px; }
.rule { flex: none; width: 59px; border-top: 1px solid #555; }
.rule.broken { border: 0; height: 1px; background: linear-gradient(90deg, #555 20px, transparent 20px 25px, #555 25px 30px, transparent 30px 34px, #555 34px 38px, transparent 38px 40px, #555 40px); }
.clip { overflow: hidden; margin-right: 4px; }
.g-group { grid-template-columns: 44px 22px; }
.g-util { grid-template-columns: 74px 22px; }
.g-util .col { padding-left: 2px; }
.g-clip { grid-template-columns: 68px 30px; }
.g-clip .col { padding-left: 2px; }
.g-view { grid-template-columns: 64px; }

.files { display: flex; align-items: center; height: 25px; background: #d9d9d9; padding-left: 14px; font-size: 12px; }
.fb { display: block; }
.slash { width: 1px; height: 14px; background: #b5b5b5; transform: rotate(20deg); margin: 0 10px; }
.start { margin-right: 6px; }
.ftab { display: flex; align-items: center; gap: 9px; height: 22px; align-self: flex-end; background: #f5f5f5; padding: 0 11px 0 16px; clip-path: polygon(8px 0, 100% 0, calc(100% - 8px) 100%, 0 100%); font-weight: bold; font-size: 11px; min-width: 258px; }
.ftab span { flex: 1; white-space: nowrap; }
.ftab svg, .cx { width: 8px; height: 8px; display: block; fill: none; stroke: #555; stroke-width: 1.5; }
.add { margin-left: 7px; }
.add .ico { width: 14px; height: 14px; }

.work { flex: 1; display: flex; }
.left { width: 312px; margin-right: 4px; padding: 5px 0; display: flex; flex-direction: column; flex: none; }
.phead { height: 20px; background: #d9d9d9; border-radius: 4px 4px 0 0; display: flex; align-items: center; gap: 6px; padding-left: 5px; font-size: 11px; flex: none; }
.phead.low { margin-top: 12px; height: 21px; padding-bottom: 3px; }
.grip { width: 3px; height: 9px; background: repeating-linear-gradient(#aaa 0 1px, #d9d9d9 1px 2px); }
.frow { display: flex; align-items: center; height: 28px; padding: 0 16px 0 13px; font-size: 10px; }
.frow label { flex: 1; }
.frow .fi { margin-left: 17px; }
.frow.second { height: 18px; padding-right: 14px; }
.frow.second span { flex: 1; white-space: nowrap; }
.pgrid { margin: 6px 9px 0 10px; height: 262px; background: #fff linear-gradient(90deg, transparent 146px, #f0f0f0 146px 148px, transparent 148px); }
table { width: 100%; border-collapse: separate; border-spacing: 0; table-layout: fixed; line-height: 14px; }
td, th { padding: 0; height: 16px; text-align: left; border-bottom: 1px solid #eee; white-space: nowrap; font-size: 10px; color: #222; }
th { background: #efefef; color: #666; font-size: 11px; }
.gut { width: 16px; background: #efefef; }
.keycol { width: 131px; }
.key { padding-left: 3px; color: #444; }
.val { padding-left: 4px; }
.dim { color: #999; }
.val.dim { color: #777; }
.sec th + th { padding-left: 4px; }
.mins { display: block; width: 9px; height: 9px; border: 1px solid #333; background: linear-gradient(#333, #333) center / 5px 1px no-repeat #fff; margin-left: 4px; }
.desc { height: 49px; margin: 4px 10px 0 11px; border: 1px solid #aaa; background: #f0f0f0; flex: none; }
.selrow { display: flex; align-items: center; gap: 7px; margin: 9px 9px 0 16px; }
.selrow .combo { flex: 1; padding-right: 3px; margin-right: 0; height: 22px; }
.selrow .ico { width: 15px; height: 15px; }
.rest { flex: 1; border-bottom: 1px solid #ddd; border-radius: 0 0 4px 4px; }

.canvas { flex: 1; min-width: 0; margin: 4px 0 3px; background: #fff; position: relative; overflow: hidden; }
.drawing { position: absolute; inset: 0; width: 100%; height: 100%; fill: none; }
.k { stroke: #222; stroke-width: 1; }
.k2 { stroke: #000; stroke-width: 1.5; }
.y { stroke: #ff0; stroke-width: 3; }
.y.thick { stroke-width: 7; }
.riser { stroke-width: 4; }
.g { stroke: #0f0; stroke-width: 3; }
.g1 { stroke-width: 7; }
.r { stroke: #f33; stroke-width: 2; stroke-dasharray: 8 2; }
.rs { stroke: #f22; stroke-width: 1.5; }
.yt { stroke: #ff0; stroke-width: 2; stroke-dasharray: 8 2; }
.thin { stroke-width: 1; }
.solid { stroke-dasharray: none; stroke-width: 1; }
.n { stroke: #6b6b20; stroke-width: .8; }
.cad { font: 14px Roboto, sans-serif; fill: #222; }
.box { font: 17px "Liberation Mono", monospace; fill: #f22; }
.cube { stroke: #c4c4c4; }
.cube circle { stroke: #f6f6f6; stroke-width: 8; stroke-opacity: .6; }
.cube rect { fill: #e8e8e8; fill-opacity: .8; stroke: #999; }
.cube .in { fill: #dde3e6; stroke: none; }
.cube text { text-anchor: middle; font: bold 19px Roboto, sans-serif; fill: #f0f0f0; stroke: #c6c6c6; }
.cube .face { font: 14px Roboto, sans-serif; fill: #888; stroke: none; }
.cube .pill { fill: #e9e9f3; stroke: none; }
.cube .msk { font: 11px Roboto, sans-serif; fill: #888; stroke: none; }
.vplabel { position: absolute; left: 3px; top: 6px; color: #222; font-size: 11px; }
.vpbtns { position: absolute; right: 9px; top: 7px; display: flex; gap: 7px; }
.vpbtns svg { width: 12px; height: 12px; display: block; fill: none; stroke: #555; }
.navbar { position: absolute; right: 3px; top: 217px; width: 32px; height: 199px; fill: none; stroke: #dcdcdc; }
.navbar rect { fill: #f3f3f3; stroke: #ccc; stroke-width: 2; }
.tip { position: absolute; left: 951px; top: 656px; display: flex; gap: 3px; }
.tip span { width: 229px; height: 21px; line-height: 18px; border: 1px solid #222; border-bottom-width: 2px; background: #999; color: #111; padding-left: 4px; white-space: nowrap; }
.entry { width: 24px; height: 19px; border: 1px solid #222; background: #fff; padding: 2px 0 0 4px; }
.entry::before { content: ""; display: block; width: 11px; height: 13px; background: #0078d7; }

.dialog { position: absolute; left: 226px; top: 124px; width: 279px; height: 422px; background: #f0f0f0; border: 1px solid #aaa; box-shadow: 0 3px 10px #0006; color: #222; display: flex; flex-direction: column; font-size: 10px; }
.dhead { display: flex; align-items: center; height: 27px; background: #fff; padding: 0 14px 0 7px; gap: 6px; color: #999; font-size: 11px; }
.dhead .ico { width: 14px; height: 13px; stroke: none; }
.dhead span { flex: 1; }
.dhead button { width: 12px; margin-left: 24px; font-size: 13px; }
.dhead svg { width: 10px; height: 10px; fill: none; stroke: #888; display: block; }
.dbody { padding: 6px 6px 0 4px; }
.dbody p { margin: 0 0 14px 3px; }
.nums { display: flex; gap: 2px; margin-left: 4px; }
.nums label { width: 44px; white-space: nowrap; display: flex; flex-direction: column; gap: 2px; }
.nums label:last-child { margin-left: 8px; }
.nums input { width: 44px; height: 19px; border: 1px solid #ccc; background: #f0f0f0; font: inherit; color: #777; padding: 0 5px; }
.acts { display: flex; margin: 4px 0 9px 3px; }
.acts button { width: 73px; height: 18px; border: 1px solid #adadad; background: #e1e1e1; line-height: 15px; }
.acts button:disabled { background: #ccc; color: #a0a090; border-color: #bfbfbf; }
.dbody ul { list-style: none; margin: 0; padding: 0; display: flex; flex-direction: column; gap: 2px; }
.dbody li { height: 37px; border: 1px solid #111; padding: 1px 3px; font: bold 11px/14px Roboto, sans-serif; color: #111; white-space: nowrap; }
.red { background: #f00; }
.yellow { background: #ff0; }
.lime { background: #0f0; }

.cmd { position: absolute; left: 262px; right: 261px; bottom: 1px; font: 11px/14px "Liberation Mono", monospace; color: #222; }
.hist { margin: 0 0 3px 59px; width: max-content; background: #7a7a7a; color: #fff; padding: 0 2px; border-radius: 1px; }
.cline { display: flex; align-items: center; height: 24px; border: 1px solid #ddd; background: #fff; padding-right: 5px; gap: 3px; }
.cline > span { flex: 1; white-space: nowrap; padding: 2px 0 0 2px; }
.cgray { width: 52px; height: 22px; background: #d9d9d9; display: flex; align-items: center; gap: 7px; padding-left: 3px; }
.gr { width: 7px; }

.right { width: 222px; flex: none; display: flex; flex-direction: column; padding-bottom: 5px; }
.rtitle { display: flex; align-items: center; height: 33px; gap: 4px; padding: 5px 0 0 9px; }
.rtitle .ico { width: 13px; height: 13px; }
.rtabs { display: flex; height: 32px; padding: 0 4px 0 1px; }
.rtabs button { flex: 1; display: grid; place-items: center; border-top: 2px solid transparent; }
.rtabs .active { background: #d9d9d9; border-top-color: #8f6b47; }
.rtabs .ico { width: 22px; height: 22px; }
.rbody { flex: 1; background: #d9d9d9; padding: 0 11px; display: flex; flex-direction: column; }
.rbody h3 { margin: 0; font: inherit; height: 22px; line-height: 23px; }
.rlist { flex: 1; background: #ebebeb; padding: 2px 7px 0 6px; white-space: nowrap; }
.rlist button { display: flex; align-items: center; gap: 4px; width: 100%; height: 22px; text-align: left; }
.rlist .ico { width: 15px; height: 15px; }
.rlist .car { margin-left: auto; margin-right: 2px; }
.rlist hr { border: 0; border-top: 2px solid #d5d5d5; margin: 3px -5px 2px -4px; }
.sub { background: #f5f5f5; padding: 1px 0 1px 18px; margin: 1px 0 1px; font-size: 10px; }
.sub button { gap: 3px; }
.sub button.op { height: 24px; }
.sub label { display: flex; align-items: center; gap: 3px; height: 17px; padding-left: 17px; }
.sub label + .op { margin-top: 1px; }
.sub:last-child { padding: 3px 0 6px 18px; }
.sub input { appearance: none; width: 13px; height: 13px; margin: 0; border: 1px solid #555; background: #fff; position: relative; }
.sub input:checked::before { content: ""; position: absolute; left: 4px; top: 1px; width: 4px; height: 7px; border: solid #222; border-width: 0 1px 1px 0; transform: rotate(40deg); }
.rfoot { display: flex; align-items: center; height: 29px; padding-top: 1px; gap: 6px; }
.sp { flex: 1; }
.sp2 { width: 1px; }

.status { display: flex; align-items: center; height: 27px; background: #d9d9d9; padding: 0 2px 1px 14px; border-top: 1px solid #ccc; }
.mtab { height: 22px; align-self: flex-start; width: 73px; margin-left: 8px; font-weight: bold; font-size: 12px; background: #f5f5f5; clip-path: polygon(8px 0, 100% 0, calc(100% - 8px) 100%, 0 100%); }
.lay { margin-left: 7px; font-size: 12px; }
.status .add { margin-left: 2px; }
.status .slash { margin: 0 8px; }
.cells { margin-left: auto; display: flex; gap: 3px; }
.cg { display: flex; background: #f3f3f3; height: 21px; }
.cg button { display: grid; place-items: center; }
.cg .on { background: #cce4fb; border: 1px solid #5b86b0; }
</style>
